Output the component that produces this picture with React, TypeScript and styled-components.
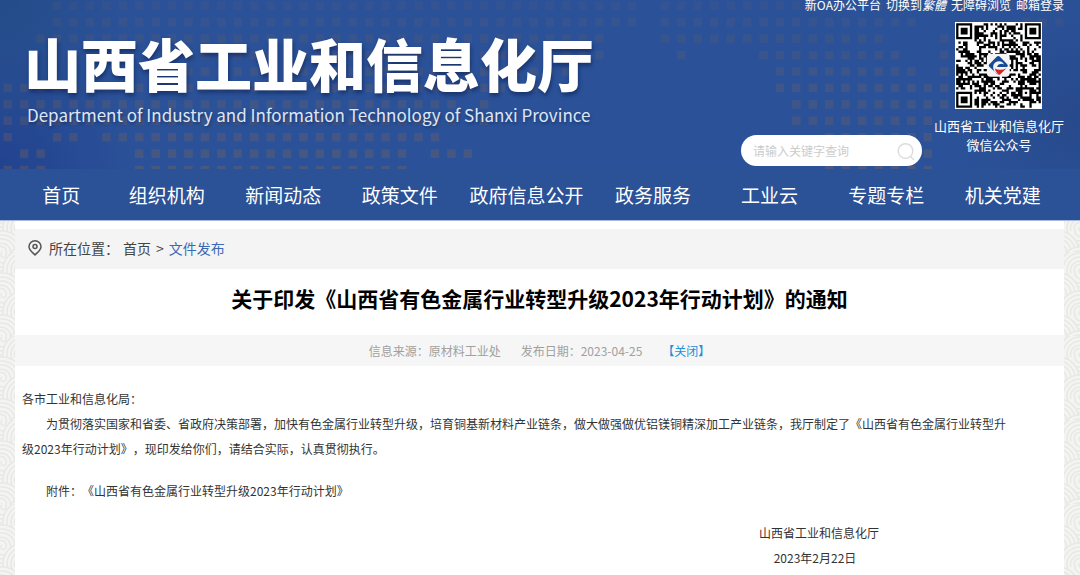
import React from "react";
import styled, { createGlobalStyle } from "styled-components";

const GlobalStyle = createGlobalStyle`
  * { box-sizing: border-box; }
  body {
    margin: 0;
    font-family: "Noto Sans CJK SC", "Noto Sans", sans-serif;
    text-spacing-trim: space-all;
    background: #f3f3f1;
  }
  a { color: inherit; text-decoration: none; }
  h1, p { margin: 0; }
`;

const Page = styled.div`
  position: relative;
  min-height: 100vh;
`;

const Clouds = styled.svg`
  position: absolute;
  inset: 0;
  width: 100%;
  height: 100%;
`;

const Header = styled.header`
  position: relative;
  background: #2b5197;
  color: #fff;
  border-bottom: 1px solid #a9b8dc;
`;

const Banner = styled.div`
  position: relative;
  display: flex;
  justify-content: space-between;
  height: 169px;
  overflow: hidden;
  padding: 0 16px 0 24px;
  background:
    radial-gradient(circle at 0 0, rgba(34, 74, 132, 0.8), rgba(34, 74, 132, 0) 130px),
    radial-gradient(circle at 0 100%, rgba(32, 62, 140, 0.8), rgba(32, 62, 140, 0) 140px),
    radial-gradient(circle at 100% 70%, rgba(38, 70, 134, 0.7), rgba(38, 70, 134, 0) 130px),
    #2b5299;
`;

const Dots = styled.svg`
  position: absolute;
  top: 0;
  left: 0;
  width: 100%;
  height: 100%;
`;

const Brand = styled.div`
  position: relative;
  padding-top: 22px;
  white-space: nowrap;
`;

const SiteName = styled.p`
  font-size: 57px;
  line-height: 80px;
  font-weight: 900;
  text-shadow: 1px 3px 4px rgba(10, 30, 80, 0.6);
`;

const SiteNameEn = styled.p`
  padding-left: 3px;
  font-size: 17px;
  line-height: 26px;
  color: #dfe6f3;
  text-shadow: 1px 2px 3px rgba(10, 30, 80, 0.5);
`;

const Tools = styled.div`
  position: relative;
  display: flex;
  flex-direction: column;
  align-items: flex-end;
`;

const QuickLinks = styled.div`
  display: flex;
  gap: 5px;
  height: 22px;
  font-size: 12px;
  line-height: 10px;
  white-space: nowrap;
`;

const ToolsRow = styled.div`
  display: flex;
  align-items: flex-end;
  gap: 12px;
`;

const Search = styled.form`
  display: flex;
  align-items: center;
  width: 181px;
  height: 31px;
  margin-bottom: -12px;
  padding: 0 6px 0 12px;
  border-radius: 16px;
  background: #fff;
`;

const SearchInput = styled.input`
  flex: 1;
  min-width: 0;
  padding: 0;
  border: 0;
  outline: 0;
  background: none;
  font-family: inherit;
  font-size: 12px;
  &::placeholder { color: #ccc; opacity: 1; }
`;

const SearchButton = styled.button`
  display: flex;
  padding: 0;
  border: 0;
  background: none;
`;

const Wechat = styled.div`
  display: flex;
  flex-direction: column;
  align-items: center;
  font-size: 13px;
  line-height: 19px;
  text-align: center;
`;

const WechatLabel = styled.p`
  margin-top: 7px;
`;

const Nav = styled.nav`
  display: grid;
  grid-template-columns: 94fr repeat(3, 116fr) 136fr repeat(4, 116fr);
  padding: 0 19px 0 14px;
  font-size: 19px;
  line-height: 51px;
  text-align: center;
  white-space: nowrap;
`;

const Main = styled.main`
  position: relative;
  min-height: calc(100vh - 221px);
  margin: 0 16px 0 15px;
  padding-top: 8px;
  background: #fff;
`;

const Breadcrumb = styled.nav`
  display: flex;
  align-items: center;
  height: 40px;
  padding: 0 0 2px 13px;
  background: #f4f4f4;
  color: #444;
  font-size: 14px;
  white-space: nowrap;
`;

const PinIcon = styled.svg`
  margin-right: 7px;
`;

const Separator = styled.span`
  margin: 0 5px;
`;

const Location = styled.span`
  margin-right: 4px;
`;

const Current = styled.a`
  color: #3b69b5;
`;

const Title = styled.h1`
  font-size: 21px;
  line-height: 58px;
  padding-bottom: 8px;
  text-align: center;
  color: #000;
`;

const Meta = styled.div`
  display: flex;
  justify-content: center;
  gap: 20px;
  padding-top: 1px;
  background: #f6f6f6;
  color: #a0a0a0;
  font-size: 12px;
  line-height: 30px;
`;

const CloseLink = styled.a`
  color: #1f8fd8;
`;

const Article = styled.article`
  padding: 20px 0 0 7px;
  font-size: 12px;
  line-height: 25px;
  color: #333;
`;

const Paragraph = styled.p<{ $indent?: boolean; $gap?: boolean }>`
  text-indent: ${(p) => (p.$indent ? "24px" : "0")};
  margin-top: ${(p) => (p.$gap ? "17px" : "0")};
`;

const Signature = styled.div`
  width: 140px;
  margin: 17px 175px 0 auto;
  text-align: center;
`;

const SignDate = styled.p`
  padding-right: 8px;
`;

const PITCH = 16.43;

// Each row lists [first column, last column] spans of squares.
const dotRows: [number, number][][] = [
  [[3, 38], [40, 64]],
  [[3, 38], [40, 55], [62, 64]],
  [[2, 36], [40, 53], [57, 57]],
  [[10, 36], [41, 41], [46, 54], [57, 57]],
  [[10, 34], [47, 55], [57, 57]],
  [[0, 32], [47, 57]],
  [[0, 27], [29, 29], [48, 57]],
  [[0, 27], [29, 29], [48, 56]],
  [[0, 0], [3, 4], [6, 26], [50, 56]],
  [[1, 2], [8, 24], [26, 28], [50, 56]],
  [[0, 2], [8, 24], [50, 56]],
];

function DotField() {
  return (
    <Dots aria-hidden="true">
      {dotRows.flatMap((spans, r) =>
        spans.flatMap(([a, b]) =>
          Array.from({ length: b - a + 1 }, (_, i) => (
            <rect
              key={`${r}-${a + i}`}
              x={3.5 + (a + i) * PITCH}
              y={1.5 + r * PITCH}
              width="8.5"
              height="8.5"
              fill="#7d6458"
              opacity={0.12 + r * 0.022}
            />
          ))
        )
      )}
    </Dots>
  );
}

const QR_SIZE = 37;

function finder(x: number, y: number): boolean | null {
  for (const [ox, oy] of [[0, 0], [QR_SIZE - 7, 0], [0, QR_SIZE - 7]]) {
    const dx = x - ox;
    const dy = y - oy;
    if (dx >= -1 && dx <= 7 && dy >= -1 && dy <= 7) {
      const ring = Math.max(Math.abs(dx - 3), Math.abs(dy - 3));
      return ring === 3 || ring <= 1;
    }
  }
  const ring = Math.max(Math.abs(x - 30), Math.abs(y - 30));
  if (ring <= 2) return ring !== 1;
  return null;
}

function qrPath() {
  let seed = 20230425;
  let d = "";
  for (let y = 0; y < QR_SIZE; y++) {
    for (let x = 0; x < QR_SIZE; x++) {
      seed = (seed * 1103515245 + 12345) % 2147483648;
      const f = finder(x, y);
      if (f === null ? (seed >> 12) % 100 < 55 : f) d += `M${x} ${y}h1v1h-1z`;
    }
  }
  return d;
}

function QrCode() {
  return (
    <svg width="87" height="87" viewBox="-0.5 -0.5 38 38" role="img" aria-label="微信公众号二维码">
      <rect x="-0.5" y="-0.5" width="38" height="38" fill="#fff" />
      <path d={qrPath()} fill="#000" />
      <rect x="13.4" y="13.4" width="10" height="10" rx="1.6" fill="#f4f4f4" />
      <path
        d="M17.700 14.700Q18.400 14 19.100 14.700L22.300 17.900Q22.900 18.600 22.300 19.200H17.900Q18 18 19.400 17.800 20.300 17.700 20.900 18.100 19.900 16.200 17.900 16.800 15.900 17.600 16.200 19.700 16.600 21.500 18.400 22.700L14.500 19.100Q13.900 18.500 14.500 17.900z"
        fill="#164a94"
      />
      <path d="M16.900 19.800Q19.200 21 22 19.700L19.300 22.300Q18.700 22.900 18.100 22.100 17.200 21.200 16.900 19.800z" fill="#d8232a" />
    </svg>
  );
}

function CloudPattern() {
  const centers = [[2, 2], [24, 18], [2, 42], [24, 60], [2, 84], [24, 100]];
  return (
    <Clouds aria-hidden="true">
      <defs>
        <pattern id="clouds" width="44" height="84" patternUnits="userSpaceOnUse">
          <g fill="#f4f4f2" stroke="#e8e8e6" strokeWidth="1.5">
            {[-44, 0, 44].flatMap((dx) =>
              centers.map(([x, y]) => (
                <g key={`${dx}-${x}-${y}`} transform={`translate(${x + dx} ${y})`}>
                  <circle r="21" />
                  <circle r="17" />
                  <circle r="13" />
                  <path d="M-9 3A9 9 0 1 1 4 8M4 8A6 6 0 0 1-5 2A5 5 0 1 1 4 1A2.500 2.500 0 1 1 0-1" />
                </g>
              ))
            )}
          </g>
        </pattern>
      </defs>
      <rect width="100%" height="100%" fill="url(#clouds)" />
    </Clouds>
  );
}

const navItems = ["首页", "组织机构", "新闻动态", "政策文件", "政府信息公开", "政务服务", "工业云", "专题专栏", "机关党建"];

export default function App() {
  return (
    <Page>
      <GlobalStyle />
      <CloudPattern />
      <Header>
        <Banner>
          <DotField />
          <Brand>
            <SiteName>山西省工业和信息化厅</SiteName>
            <SiteNameEn>Department of Industry and Information Technology of Shanxi Province</SiteNameEn>
          </Brand>
          <Tools>
            <QuickLinks>
              <a href="#oa">新OA办公平台</a>
              <a href="#trad">切换到<em>繁體</em></a>
              <a href="#a11y">无障碍浏览</a>
              <a href="#mail">邮箱登录</a>
            </QuickLinks>
            <ToolsRow>
              <Search role="search">
                <SearchInput type="text" placeholder="请输入关键字查询" aria-label="关键字查询" />
                <SearchButton type="button" aria-label="搜索">
                  <svg width="20" height="20" viewBox="0 0 20 20" fill="none" stroke="#ddd" strokeWidth="1.4">
                    <circle cx="9.5" cy="10" r="7.3" />
                    <path d="M14.5 15.5 18 19" />
                  </svg>
                </SearchButton>
              </Search>
              <Wechat>
                <QrCode />
                <WechatLabel>
                  山西省工业和信息化厅
                  <br />
                  微信公众号
                </WechatLabel>
              </Wechat>
            </ToolsRow>
          </Tools>
        </Banner>
        <Nav>
          {navItems.map((item) => (
            <a key={item} href="#nav">{item}</a>
          ))}
        </Nav>
      </Header>
      <Main>
        <Breadcrumb>
          <PinIcon width="14" height="16" viewBox="0 0 14 16" fill="none" stroke="#555" strokeWidth="1.5">
            <path d="M7 15C4.500 12.300 1 10 1 6.700a6 5.900 0 0 1 12 0C13 10 9.500 12.300 7 15z" />
            <circle cx="7" cy="6.400" r="2" />
          </PinIcon>
          <Location>所在位置：</Location>
          <a href="#home">首页</a>
          <Separator>&gt;</Separator>
          <Current href="#files">文件发布</Current>
        </Breadcrumb>
        <Title>关于印发《山西省有色金属行业转型升级2023年行动计划》的通知</Title>
        <Meta>
          <span>信息来源：原材料工业处</span>
          <span>发布日期：2023-04-25</span>
          <CloseLink href="#close">【关闭】</CloseLink>
        </Meta>
        <Article>
          <Paragraph>各市工业和信息化局：</Paragraph>
          <Paragraph $indent>
            为贯彻落实国家和省委、省政府决策部署，加快有色金属行业转型升级，培育铜基新材料产业链条，做大做强做优铝镁铜精深加工产业链条，我厅制定了《山西省有色金属行业转型升
            <br />
            级2023年行动计划》，现印发给你们，请结合实际，认真贯彻执行。
          </Paragraph>
          <Paragraph $indent $gap>附件：《山西省有色金属行业转型升级2023年行动计划》</Paragraph>
          <Signature>
            <p>山西省工业和信息化厅</p>
            <SignDate>2023年2月22日</SignDate>
          </Signature>
        </Article>
      </Main>
    </Page>
  );
}
